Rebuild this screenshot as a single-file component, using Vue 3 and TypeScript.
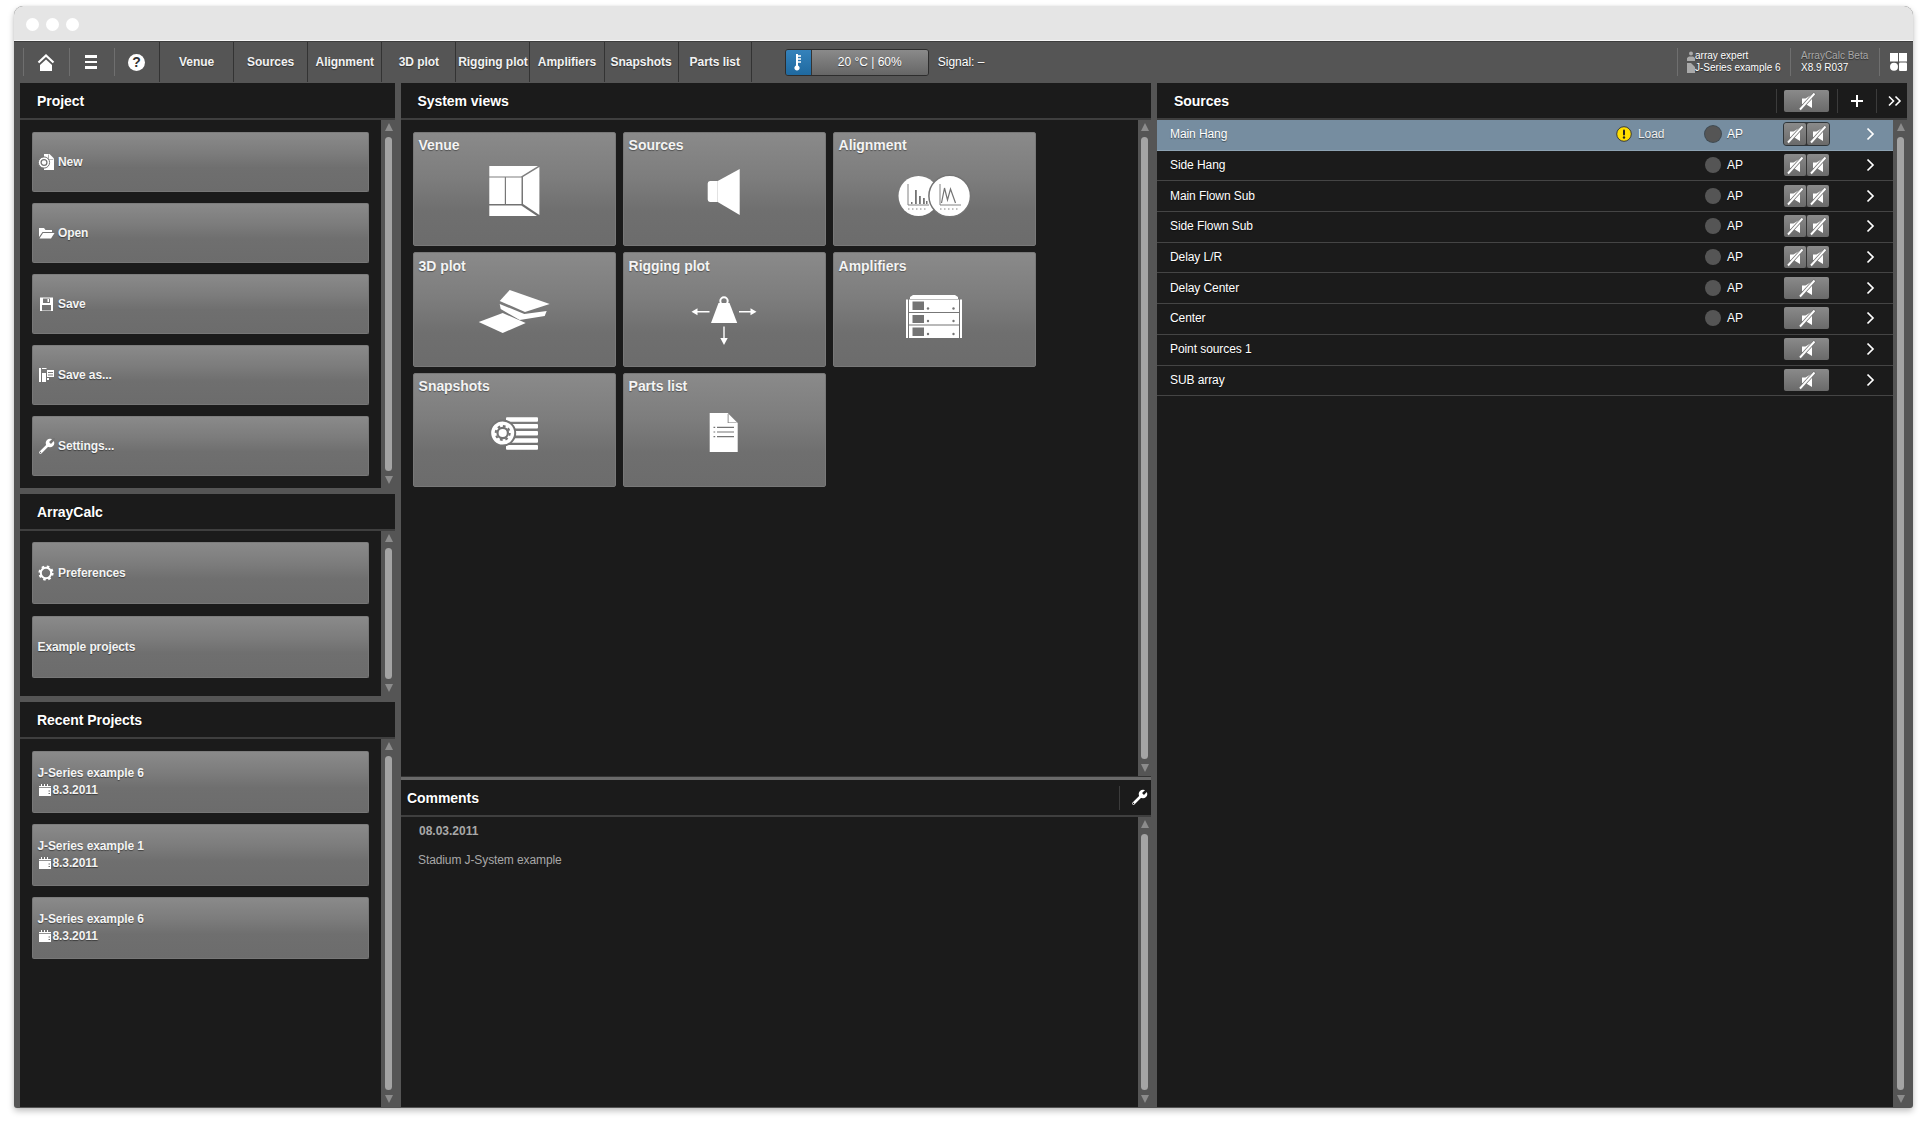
<script setup lang="ts">
const tabs = ['Venue', 'Sources', 'Alignment', '3D plot', 'Rigging plot', 'Amplifiers', 'Snapshots', 'Parts list']

const W = '#fff'
const G = '#747474'
const small: Record<string, string> = {
  new: `<path fill="${W}" d="M6 0h5.500L16 4.500V16H6z"/><path fill="${G}" d="M11 .5v4.500h4.500l-.5.600h-4.600V.5z"/><circle cx="6" cy="8.500" r="5.600" fill="${W}" stroke="${G}"/><circle cx="6" cy="8.500" r="2.900" fill="none" stroke="${G}" stroke-width="1.300"/>`,
  open: `<path fill="${W}" d="M1 3h5l1.500 2H14v2H4.500L1 12z"/><path fill="${W}" d="M5 8h11.500L13 13.500H1.500z"/>`,
  save: `<path fill="${W}" fill-rule="evenodd" d="M2 1.500h13V15H2zM5 2.500v4.500h7V2.500zM4 9v5.500h9V9z"/><path fill="${W}" d="M9.500 3h1.500v3H9.500z"/>`,
  saveas: `<path fill="${W}" fill-rule="evenodd" d="M1 1h2v14H1zM4 1h4l1 1H4zM4 6h4v9H4zM9 3h7v7H9zM10 5v1h5V5zM10 7.500v1h5v-1z"/><path fill="${W}" d="M9 11h2v2H9z"/>`,
  wrench: `<path stroke="${W}" stroke-width="2.600" stroke-linecap="round" d="M2.500 14.500 10.500 6.500"/><circle cx="12" cy="5" r="4.300" fill="${W}"/><path stroke="${G}" stroke-width="2.600" d="M12 5 17 0"/><circle cx="2.500" cy="14.500" r=".7" fill="${G}"/>`,
  gear: `<circle cx="8" cy="8" r="5.200" fill="none" stroke="${W}" stroke-width="2"/><circle cx="8" cy="8" r="6.400" fill="none" stroke="${W}" stroke-width="2.400" stroke-dasharray="2.500 2.530"/>`,
  cal: `<path fill="${W}" d="M1 5h12v8H1z"/><path fill="${W}" d="M1 3h2V1h1v2h2V1h1v2h2V1h1v2h3v1.200H1z"/><path fill="${G}" d="M10.500 10h1.500v1h-1.500zM10.500 7.500h1.500v1h-1.500z"/>`,
}

const tileIcons: Record<string, string> = {
  venue: `<g fill="${W}"><path d="M15.300 7H64l-17 10.500H15.300z"/><path d="M15.300 18.500h15.500V45H15.300zM32 18.500h15.500V45H32z"/><path d="M49 18 65.400 8v48L49 45z"/><path d="M15.300 46.500h32L63 57H15.300z"/></g>`,
  sources: `<path fill="${W}" d="M26 22h7.700v21H26a2.500 2.500 0 0 1-2.300-2.500v-16A2.500 2.500 0 0 1 26 22z"/><path fill="${W}" d="M33.700 22 55.700 10v46L33.700 43z"/>`,
  alignment: `<circle cx="24.500" cy="37" r="20" fill="${W}"/><circle cx="55.700" cy="37" r="20.800" fill="${W}" stroke="${G}" stroke-width="1.500"/><g fill="none" stroke="${G}" stroke-width=".9"><path d="M14 25v21h21"/><path d="M46 25v21h21"/><path d="M14 50h20M46 50h20" stroke-dasharray="1.500 2.500"/><path d="M47.500 44l3-15 3 12 3-11 5 14" stroke-width="1.200"/></g><g fill="${G}"><path d="M17 43h1.500v2H17zM21 31h1.800v14H21zM25 37h1.800v8H25zM29 39h1.800v6H29zM32 42h1.500v3H32z"/></g>`,
  plot: `<g fill="${W}"><path d="M35.700 10 75.700 24 51 32 25.700 21z"/><path d="M25.700 24 50.300 34 72.700 31 70.700 36 45.700 40 26.700 29z"/><path d="M4.700 42 28.700 33 51.700 43 28.700 53z"/></g>`,
  rigging: `<path fill="${W}" d="M34.500 23h11l7.700 20H27z"/><circle cx="40" cy="21" r="3.700" fill="none" stroke="${W}" stroke-width="2"/><g stroke="${W}" stroke-width="1.400"><path d="M12 31.700h13.500M55 31.700h13.500M40 46.500V60"/></g><g fill="${W}"><path d="M7.500 31.700l6-3.500v7zM72.500 31.700l-6-3.500v7zM40 65l-3.700-7h7.400z"/></g>`,
  amps: `<g fill="${W}"><path d="M16 17 19 15h42l3 2v2H16z"/><path d="M12 19.500h2V58h-2zM66 19.500h2V58h-2z"/><path d="M15 19.500h50V32H15zM15 33h50v11.500H15zM15 45.500h50V58H15z"/></g><g fill="${G}"><path d="M18.500 21.500H30V30H18.500zM18.500 35H30v8H18.500zM18.500 47.500H30v8.500H18.500z"/><circle cx="34" cy="28.500" r="1.200"/><circle cx="59.500" cy="28.500" r="1.200"/><circle cx="34" cy="41" r="1.200"/><circle cx="59.500" cy="41" r="1.200"/><circle cx="34" cy="54" r="1.200"/><circle cx="59.500" cy="54" r="1.200"/></g>`,
  snapshots: `<g fill="${W}"><rect x="32" y="17.300" width="32" height="4.400" rx="1"/><rect x="32" y="24" width="32" height="4.400" rx="1"/><rect x="32" y="31" width="32" height="4.400" rx="1"/><rect x="32" y="38.300" width="32" height="4.400" rx="1"/><rect x="32" y="45" width="32" height="4.800" rx="1"/></g><circle cx="28.700" cy="33" r="12.500" fill="${W}" stroke="${G}" stroke-width="2"/><circle cx="28.700" cy="33" r="5.200" fill="none" stroke="${G}" stroke-width="2.200"/><circle cx="28.700" cy="33" r="7" fill="none" stroke="${G}" stroke-width="2" stroke-dasharray="2.700 2.800"/>`,
  parts: `<path fill="${W}" d="M25.700 13h18l10 10v29h-28z"/><path fill="${G}" d="M44.500 14v8.500H53l-.8.500h-8.500V14z"/><g fill="${G}"><path d="M33 26.700h17v1.200H33zM33 31.400h17v1.200H33zM33 36.100h17v1.200H33z"/><path d="M29.500 26.700h1.700v1.200h-1.700zM29.500 31.400h1.700v1.200h-1.700zM29.500 36.100h1.700v1.200h-1.700z"/></g>`,
}

const projectItems = [
  { icon: 'new', label: 'New' },
  { icon: 'open', label: 'Open' },
  { icon: 'save', label: 'Save' },
  { icon: 'saveas', label: 'Save as...' },
  { icon: 'wrench', label: 'Settings...' },
]

const recents = [
  { name: 'J-Series example 6', date: '8.3.2011' },
  { name: 'J-Series example 1', date: '8.3.2011' },
  { name: 'J-Series example 6', date: '8.3.2011' },
]

const tiles = [
  { label: 'Venue', icon: 'venue' },
  { label: 'Sources', icon: 'sources' },
  { label: 'Alignment', icon: 'alignment' },
  { label: '3D plot', icon: 'plot' },
  { label: 'Rigging plot', icon: 'rigging' },
  { label: 'Amplifiers', icon: 'amps' },
  { label: 'Snapshots', icon: 'snapshots' },
  { label: 'Parts list', icon: 'parts' },
]

const sources = [
  { name: 'Main Hang', load: true, ap: true, mutes: 2, selected: true },
  { name: 'Side Hang', load: false, ap: true, mutes: 2, selected: false },
  { name: 'Main Flown Sub', load: false, ap: true, mutes: 2, selected: false },
  { name: 'Side Flown Sub', load: false, ap: true, mutes: 2, selected: false },
  { name: 'Delay L/R', load: false, ap: true, mutes: 2, selected: false },
  { name: 'Delay Center', load: false, ap: true, mutes: 1, selected: false },
  { name: 'Center', load: false, ap: true, mutes: 1, selected: false },
  { name: 'Point sources 1', load: false, ap: false, mutes: 1, selected: false },
  { name: 'SUB array', load: false, ap: false, mutes: 1, selected: false },
]

const muteIcon = `<path fill="${W}" d="M6 8.500h3.500L16 4.500v13.500L9.500 14H6z"/><path stroke="${G}" stroke-width="3.400" d="M3.500 20 19 3"/><path stroke="${W}" stroke-width="1.900" d="M4 19.500 18.500 3.500"/>`
</script>

<template>
  <div class="page">
    <div class="window">
      <div class="titlebar">
        <span class="dot"></span><span class="dot"></span><span class="dot"></span>
      </div>

      <div class="toolbar">
        <div class="tool-cell">
          <svg width="18" height="17" viewBox="0 0 18 17">
            <path d="M1.500 8.500 9 1.500l7.500 7" fill="none" stroke="#fff" stroke-width="2.200" />
            <path d="M9 5.500 15 11v6H3v-6z" fill="#fff" />
          </svg>
        </div>
        <div class="tool-cell">
          <span class="menu-bars"><i></i><i></i><i></i></span>
        </div>
        <div class="tool-cell tool-cell-last">
          <span class="help">?</span>
        </div>
        <div class="tabs">
          <div v-for="t in tabs" :key="t" class="tab">{{ t }}</div>
        </div>
        <div class="temp">
          <div class="temp-icon">
            <svg width="10" height="18" viewBox="0 0 10 18">
              <path d="M3 1h2v11.500a2.600 2.600 0 1 1-2 0z" fill="#fff" />
              <path d="M5 3h3M5 6h3M5 9h3" stroke="#fff" stroke-width="1.300" />
            </svg>
          </div>
          <div class="temp-value">20 °C | 60%</div>
        </div>
        <div class="signal">Signal: –</div>
        <div class="tool-right">
          <div class="info info-user">
            <div class="info-line">
              <svg width="8" height="10" viewBox="0 0 8 10"><circle cx="4" cy="2.500" r="2" fill="#aaa" /><path d="M0 10V7l2-1.500h4L8 7v3z" fill="#aaa" /></svg>
              <span>array expert</span>
            </div>
            <div class="info-line">
              <svg width="8" height="10" viewBox="0 0 8 10"><path d="M0 0h4l4 4v6H0z" fill="#aaa" /></svg>
              <span>J-Series example 6</span>
            </div>
          </div>
          <div class="info info-beta">
            <div class="beta-name">ArrayCalc Beta</div>
            <div>X8.9 R037</div>
          </div>
          <div class="info info-grid">
            <svg width="17" height="18" viewBox="0 0 17 18">
              <rect width="8" height="8.500" fill="#fff" />
              <rect x="9" width="8" height="8.500" fill="#fff" />
              <circle cx="4" cy="13.700" r="4" fill="#fff" />
              <rect x="9" y="9.500" width="8" height="8.500" rx="1" fill="#fff" />
            </svg>
          </div>
        </div>
      </div>

      <div class="columns">
        <div class="col-left">
          <section class="panel project">
            <header class="head head-left">Project</header>
            <div class="body">
              <div class="content stack">
                <div v-for="p in projectItems" :key="p.label" class="btn btn-project">
                  <svg class="btn-icon" width="17" height="16" viewBox="0 0 17 16" v-html="small[p.icon]"></svg>
                  <span>{{ p.label }}</span>
                </div>
              </div>
              <div class="scroll"><i class="up"></i><b></b><i class="down"></i></div>
            </div>
          </section>

          <section class="panel arraycalc">
            <header class="head head-left">ArrayCalc</header>
            <div class="body">
              <div class="content stack stack-wide">
                <div class="btn btn-tall">
                  <svg class="btn-icon" width="17" height="16" viewBox="0 0 17 16" v-html="small.gear"></svg>
                  <span>Preferences</span>
                </div>
                <div class="btn btn-tall btn-plain"><span>Example projects</span></div>
              </div>
              <div class="scroll"><i class="up"></i><b></b><i class="down"></i></div>
            </div>
          </section>

          <section class="panel recent">
            <header class="head head-left">Recent Projects</header>
            <div class="body">
              <div class="content stack stack-recent">
                <div v-for="(r, i) in recents" :key="i" class="btn btn-tall btn-recent">
                  <div class="recent-name">{{ r.name }}</div>
                  <div class="recent-date">
                    <svg width="14" height="14" viewBox="0 0 14 14" v-html="small.cal"></svg>
                    <span>{{ r.date }}</span>
                  </div>
                </div>
              </div>
              <div class="scroll"><i class="up"></i><b></b><i class="down"></i></div>
            </div>
          </section>
        </div>

        <div class="col-mid">
          <section class="panel views">
            <header class="head head-views">System views</header>
            <div class="body">
              <div class="content tiles">
                <div v-for="t in tiles" :key="t.label" class="tile">
                  <div class="tile-label">{{ t.label }}</div>
                  <svg class="tile-icon" width="80" height="64" viewBox="0 0 80 64" v-html="tileIcons[t.icon]"></svg>
                </div>
              </div>
              <div class="scroll scroll-mid"><i class="up"></i><b></b><i class="down"></i></div>
            </div>
          </section>
          <div class="mid-divider"></div>
          <section class="panel comments">
            <header class="head head-comments">
              <span>Comments</span>
              <span class="head-sep"></span>
              <svg class="comments-tool" width="17" height="17" viewBox="0 0 17 17" v-html="small.wrench.replaceAll('#747474', '#1b1b1b')"></svg>
            </header>
            <div class="body">
              <div class="content comment-text">
                <div class="comment-date">08.03.2011</div>
                <div class="comment-body">Stadium J-System example</div>
              </div>
              <div class="scroll scroll-mid"><i class="up"></i><b></b><i class="down"></i></div>
            </div>
          </section>
        </div>

        <section class="panel col-right">
          <header class="head head-sources">
            <span>Sources</span>
            <div class="head-tools">
              <span class="head-sep"></span>
              <div class="mute mute-head">
                <span class="mute-part"><svg width="22" height="22" viewBox="0 0 22 22" v-html="muteIcon"></svg></span>
              </div>
              <span class="head-sep sep-after-mute"></span>
              <svg class="plus" width="38" height="12" viewBox="0 0 38 12"><path d="M19 0v12M13 6h12" stroke="#fff" stroke-width="2" /></svg>
              <span class="head-sep"></span>
              <svg class="more" width="30" height="12" viewBox="0 0 30 12"><path d="M12 1.500l4.500 4.500L12 10.500M18.500 1.500 23 6l-4.500 4.500" fill="none" stroke="#fff" stroke-width="1.600" /></svg>
            </div>
          </header>
          <div class="body">
            <div class="content list">
              <div v-for="s in sources" :key="s.name" class="row" :class="{ selected: s.selected }">
                <div class="row-name">{{ s.name }}</div>
                <div class="row-load">
                  <template v-if="s.load">
                    <svg width="16" height="16" viewBox="0 0 16 16">
                      <circle cx="8" cy="8" r="7.300" fill="#ffdf00" stroke="#3a3a3a" stroke-width="1" />
                      <rect x="7" y="3.500" width="2" height="6" rx="1" fill="#222" />
                      <circle cx="8" cy="11.500" r="1.200" fill="#222" />
                    </svg>
                    <span>Load</span>
                  </template>
                </div>
                <div class="row-ap">
                  <template v-if="s.ap">
                    <span class="led"></span>
                    <span>AP</span>
                  </template>
                </div>
                <div class="mute" :class="{ 'mute-selected': s.selected }">
                  <span v-for="n in s.mutes" :key="n" class="mute-part">
                    <svg width="22" height="22" viewBox="0 0 22 22" v-html="muteIcon"></svg>
                  </span>
                </div>
                <div class="row-go">
                  <svg width="9" height="14" viewBox="0 0 9 14"><path d="M1.500 1.500 7 7l-5.500 5.500" fill="none" stroke="#fff" stroke-width="1.700" /></svg>
                </div>
              </div>
            </div>
            <div class="scroll"><i class="up"></i><b></b><i class="down"></i></div>
          </div>
        </section>
      </div>
    </div>
  </div>
</template>

<style>
html, body { background: #fff; margin: 0; }
</style>

<style scoped>
.page {
  width: 1920px;
  height: 1122px;
  box-sizing: border-box;
  padding: 6px 7px 14px 14px;
  overflow: hidden;
  background: #fff;
  font-family: "Liberation Sans", Arial, sans-serif;
  color: #fff;
}
.window {
  height: 100%;
  display: flex;
  flex-direction: column;
  background: #555;
  border-radius: 9px 9px 3px 3px;
  box-shadow: 0 3px 6px rgba(0, 0, 0, 0.25), 0 0 2px rgba(0, 0, 0, 0.08);
}
.titlebar {
  height: 35px;
  flex: none;
  display: flex;
  align-items: center;
  gap: 7px;
  padding-left: 12px;
  padding-top: 2px;
  box-sizing: border-box;
  background: #e5e5e5;
  border-bottom: 1px solid #f6f6f6;
  border-radius: 9px 9px 0 0;
}
.dot { width: 13px; height: 13px; border-radius: 50%; background: #fff; }

.toolbar {
  height: 42px;
  flex: none;
  box-sizing: border-box;
  display: flex;
  align-items: center;
  padding-left: 9px;
  padding-bottom: 1px;
  border-top: 1px solid #3d3d3d;
  font-size: 12px;
  font-weight: bold;
  text-shadow: 0 1px 1px rgba(0, 0, 0, 0.45);
}
.tool-cell {
  width: 45.500px;
  height: 28px;
  box-sizing: border-box;
  padding-right: 1px;
  border-left: 1px solid #6f6f6f;
  display: flex;
  align-items: center;
  justify-content: center;
}
.tool-cell-last { width: 45px; }
.menu-bars { display: flex; flex-direction: column; gap: 3px; width: 12px; }
.menu-bars i { display: block; height: 2.500px; background: #fff; }
.help {
  width: 17px;
  height: 17px;
  border-radius: 50%;
  background: #fff;
  color: #333;
  font-size: 14px;
  line-height: 17px;
  text-align: center;
  text-shadow: none;
}
.tabs { display: flex; height: 100%; }
.tab {
  width: 74.100px;
  box-sizing: border-box;
  border-left: 1px solid #333;
  display: flex;
  align-items: center;
  justify-content: center;
  white-space: nowrap;
  color: #f2f2f2;
  letter-spacing: -0.04px;
}
.tab:last-child { border-right: 1px solid #333; }
.temp {
  width: 144px;
  height: 27px;
  margin-left: 33px;
  box-sizing: border-box;
  display: flex;
  border: 1px solid #2d2d2d;
  border-radius: 3px;
  overflow: hidden;
  font-weight: normal;
}
.temp-icon {
  width: 25px;
  flex: none;
  display: flex;
  align-items: center;
  justify-content: center;
  background: linear-gradient(#3582bb, #1f699f);
  border-right: 1px solid #333;
}
.temp-value {
  flex: 1;
  text-align: center;
  line-height: 25px;
  background: linear-gradient(#8a8a8a, #666);
}
.signal { margin-left: 9px; font-weight: normal; }
.tool-right { margin-left: auto; display: flex; align-items: center; font-size: 10px; font-weight: normal; }
.info {
  height: 28px;
  box-sizing: border-box;
  border-left: 1px solid #6f6f6f;
  line-height: 12px;
  display: flex;
  flex-direction: column;
  justify-content: center;
}
.info-user { width: 113px; padding-left: 9px; }
.info-line { display: flex; align-items: center; }
.info-line span { white-space: nowrap; }
.info-line svg { flex: none; }
.info-beta { width: 89px; padding-left: 10px; }
.beta-name { color: #a9a9a9; white-space: nowrap; }
.info-grid { width: 34px; padding-left: 10px; }

.columns {
  flex: 1;
  min-height: 0;
  display: grid;
  grid-template-columns: 375px 750px 750px;
  column-gap: 6px;
  padding: 0 6px 1px;
}
.col-left { display: flex; flex-direction: column; gap: 6px; min-height: 0; }
.col-mid { display: flex; flex-direction: column; min-height: 0; }
.panel { display: flex; flex-direction: column; background: #1b1b1b; min-height: 0; }
.project { height: 405px; flex: none; }
.arraycalc { height: 202px; flex: none; }
.recent { flex: 1; }
.views { height: 693px; flex: none; }
.comments { flex: 1; }
.col-right { min-height: 0; }
.mid-divider { height: 4px; flex: none; background: #6a6a6a; border-top: 1px solid #333; box-sizing: border-box; }

.head {
  height: 37px;
  flex: none;
  box-sizing: border-box;
  display: flex;
  align-items: center;
  border-bottom: 2px solid #3f3f3f;
  font-size: 14px;
  font-weight: bold;
  letter-spacing: -0.05px;
  text-shadow: 0 1px 1px rgba(0, 0, 0, 0.6);
}
.head-left { padding-left: 17px; }
.head-views { padding-left: 16.500px; }
.head-comments { padding-left: 6px; }
.head-sources { padding-left: 17px; }
.head-sep { width: 1px; height: 24px; background: #3c3c3c; flex: none; }
.head-comments .head-sep { margin-left: auto; margin-right: 11px; }
.comments-tool { margin-right: 3px; }
.head-tools { margin-left: auto; display: flex; align-items: center; }
.mute-head { margin-left: 7px; }
.sep-after-mute { margin-left: 8px; }

.body { flex: 1; display: flex; min-height: 0; }
.content { flex: 1; min-width: 0; }
.scroll {
  width: 14px;
  flex: none;
  box-sizing: border-box;
  background: #555;
  padding: 3px 3px 4px 4px;
  display: flex;
  flex-direction: column;
  align-items: center;
}
.scroll-mid { width: 13px; padding-left: 3px; }
.scroll b { flex: 1; width: 7px; margin: 6px 0 5px; background: #a4a4a4; border-radius: 4px; }
.scroll i { width: 0; height: 0; border-left: 4px solid transparent; border-right: 4px solid transparent; flex: none; }
.scroll .up { border-bottom: 8px solid #8c8c8c; }
.scroll .down { border-top: 8px solid #8c8c8c; }

.stack { display: flex; flex-direction: column; gap: 11.100px; padding: 11.500px 12px 11px; }
.stack-wide { gap: 12px; padding-top: 11px; }
.stack-recent { gap: 11px; padding-top: 12px; }
.btn {
  box-sizing: border-box;
  display: flex;
  align-items: center;
  padding-left: 5px;
  border: 1px solid #777;
  border-top-color: #7d7d7d;
  border-radius: 2px;
  background: linear-gradient(#8a8a8a 0%, #7c7c7c 35%, #6f6f6f 60%, #6c6c6c 100%);
  font-size: 12px;
  font-weight: bold;
  color: #f4f4f4;
  letter-spacing: -0.1px;
  text-shadow: 0 1px 1px rgba(0, 0, 0, 0.45);
}
.btn-project { height: 60px; flex: none; }
.btn-tall { height: 62px; flex: none; }
.btn-icon { flex: none; margin-right: 3px; }
.btn-plain { padding-left: 4.500px; }
.btn-recent { flex-direction: column; align-items: flex-start; justify-content: center; gap: 1px; padding-left: 4.500px; padding-bottom: 1px; }
.recent-date { display: flex; align-items: center; gap: 1px; height: 15px; }
.recent-name { height: 15px; line-height: 15px; }

.tiles {
  display: grid;
  grid-template-columns: repeat(3, 203.500px);
  grid-auto-rows: 114.500px;
  gap: 6px 6.500px;
  padding: 11.500px 0 0 11.600px;
  align-content: start;
}
.tile {
  box-sizing: border-box;
  border: 1px solid #787878;
  border-radius: 2px;
  background: linear-gradient(#8a8a8a 0%, #7d7d7d 40%, #6f6f6f 70%, #6c6c6c 100%);
  display: flex;
  flex-direction: column;
  align-items: center;
}
.tile-label {
  align-self: flex-start;
  height: 26.500px;
  flex: none;
  box-sizing: border-box;
  padding: 4.500px 0 0 5px;
  font-size: 14px;
  line-height: 17px;
  font-weight: bold;
  color: #f4f4f4;
  letter-spacing: -0.05px;
  text-shadow: 0 1px 1px rgba(0, 0, 0, 0.4);
}
.tile-icon { flex: none; overflow: visible; }

.comment-text { padding: 8px 0 0 17px; }
.comment-date { font-size: 12px; font-weight: bold; color: #a8a8a8; line-height: 13px; padding-left: 1px; }
.comment-body { margin-top: 15px; font-size: 12px; color: #a8a8a8; line-height: 14px; letter-spacing: -0.1px; }

.row {
  height: 30.700px;
  box-sizing: border-box;
  padding-left: 13px;
  padding-bottom: 1px;
  display: flex;
  align-items: center;
  border-bottom: 1px solid #454545;
  font-size: 12px;
  letter-spacing: -0.08px;
  text-shadow: 0 1px 1px rgba(0, 0, 0, 0.5);
}
.row.selected { background: #768da0; border-bottom: 1px solid #8ea3b3; }
.row-name { flex: 1; min-width: 0; }
.row-load { width: 89px; flex: none; display: flex; align-items: center; gap: 6px; color: #eee; }
.row-ap { width: 79px; flex: none; display: flex; align-items: center; gap: 6px; }
.led { width: 16px; height: 16px; border-radius: 50%; background: #555; flex: none; }
.selected .led { box-shadow: 0 0 0 1px #3f4a52; }
.mute {
  width: 45px;
  height: 22px;
  flex: none;
  display: flex;
  gap: 1px;
  border-radius: 3px;
  background: #333;
}
.mute-selected { box-shadow: 0 0 0 1px #2e3438; }
.mute-part {
  flex: 1;
  display: flex;
  align-items: center;
  justify-content: center;
  overflow: hidden;
  background: linear-gradient(#8a8a8a, #6a6a6a);
  border-radius: 2px;
}
.row-go { width: 64px; flex: none; display: flex; justify-content: flex-start; padding-left: 37px; box-sizing: border-box; }
.more { flex: none; }
.plus { flex: none; }
</style>
